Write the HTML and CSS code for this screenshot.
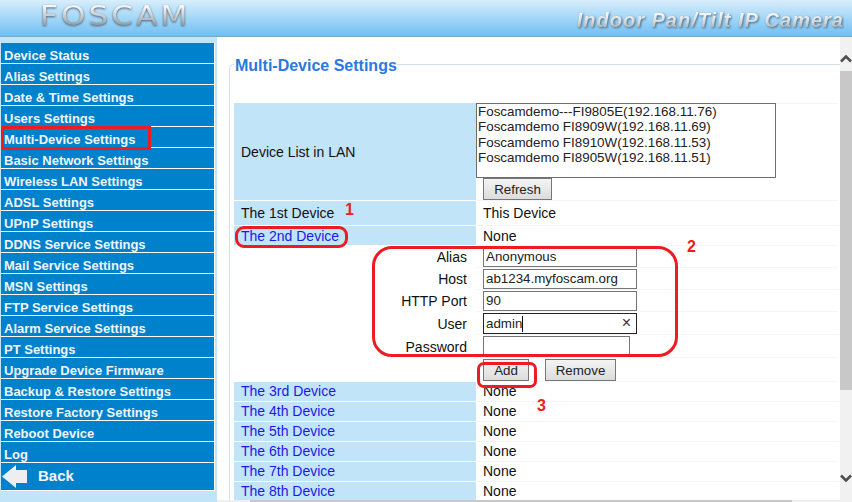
FILE: index.html
```html
<!DOCTYPE html>
<html lang="en">
<head>
<meta charset="utf-8">
<title>Multi-Device Settings</title>
<link rel="stylesheet" href="styles.css">
</head>
<body>
<div class="page">
  <header class="top">
    <div class="logo">FOSCAM</div>
    <div class="tagline">Indoor Pan/Tilt IP Camera</div>
  </header>
  <div class="main">
    <nav class="side">
      <ul class="menu">
        <li>Device Status</li>
        <li>Alias Settings</li>
        <li>Date &amp; Time Settings</li>
        <li>Users Settings</li>
        <li>Multi-Device Settings</li>
        <li>Basic Network Settings</li>
        <li>Wireless LAN Settings</li>
        <li>ADSL Settings</li>
        <li>UPnP Settings</li>
        <li>DDNS Service Settings</li>
        <li>Mail Service Settings</li>
        <li>MSN Settings</li>
        <li>FTP Service Settings</li>
        <li>Alarm Service Settings</li>
        <li>PT Settings</li>
        <li>Upgrade Device Firmware</li>
        <li>Backup &amp; Restore Settings</li>
        <li>Restore Factory Settings</li>
        <li>Reboot Device</li>
        <li>Log</li>
        <li class="back">
          <svg class="back-arrow" width="25" height="25" viewBox="0 0 25 25"><path d="M0 12.5 L14 1 V6 H25 V19 H14 V24 Z" fill="#eeeeee"/></svg>
          <span class="back-label">Back</span>
        </li>
      </ul>
    </nav>
    <div class="pane">
      <div class="view">
        <div class="scroller">
          <fieldset class="box">
            <legend class="title">Multi-Device Settings</legend>
            <table class="grid">
              <tr class="r-list">
                <th>Device List in LAN</th>
                <td>
                  <div class="listbox">
                    <div>Foscamdemo---FI9805E(192.168.11.76)</div>
                    <div>Foscamdemo FI8909W(192.168.11.69)</div>
                    <div>Foscamdemo FI8910W(192.168.11.53)</div>
                    <div>Foscamdemo FI8905W(192.168.11.51)</div>
                  </div>
                  <button class="btn btn-refresh">Refresh</button>
                </td>
              </tr>
              <tr class="r-first"><th>The 1st Device</th><td class="val">This Device</td></tr>
              <tr class="r-dev"><th class="link">The 2nd Device</th><td class="val">None</td></tr>
              <tr class="r-form"><th class="lbl">Alias</th><td><span class="inp">Anonymous</span></td></tr>
              <tr class="r-form"><th class="lbl">Host</th><td><span class="inp">ab1234.myfoscam.org</span></td></tr>
              <tr class="r-form"><th class="lbl">HTTP Port</th><td><span class="inp">90</span></td></tr>
              <tr class="r-form r-user"><th class="lbl">User</th><td><span class="inp inp-focus"><span class="typed">admin</span><span class="clear">×</span></span></td></tr>
              <tr class="r-form r-pass"><th class="lbl">Password</th><td><span class="inp inp-pass"></span></td></tr>
              <tr class="r-btns"><th class="lbl"></th><td><button class="btn btn-add">Add</button><button class="btn btn-remove">Remove</button></td></tr>
              <tr class="r-dev r-low"><th class="link">The 3rd Device</th><td class="val">None</td></tr>
              <tr class="r-dev r-low"><th class="link">The 4th Device</th><td class="val">None</td></tr>
              <tr class="r-dev r-low"><th class="link">The 5th Device</th><td class="val">None</td></tr>
              <tr class="r-dev r-low"><th class="link">The 6th Device</th><td class="val">None</td></tr>
              <tr class="r-dev r-low"><th class="link">The 7th Device</th><td class="val">None</td></tr>
              <tr class="r-dev r-low"><th class="link">The 8th Device</th><td class="val">None</td></tr>
            </table>
          </fieldset>
        </div>
        <div class="hbar"><div class="hthumb"></div></div>
      </div>
      <div class="vbar">
        <svg class="chev" width="12" height="8" viewBox="0 0 12 8"><path d="M1 6.5 L6 1.5 L11 6.5" fill="none" stroke="#505050" stroke-width="2.6"/></svg>
        <div class="thumb"></div>
        <svg class="chev chev-down" width="12" height="8" viewBox="0 0 12 8"><path d="M1 1.5 L6 6.5 L11 1.5" fill="none" stroke="#505050" stroke-width="2.6"/></svg>
      </div>
    </div>
  </div>
  <div class="mark mark-menu"></div>
  <div class="mark mark-dev"></div>
  <div class="mark mark-form"></div>
  <div class="mark mark-add"></div>
  <div class="num num-1">1</div>
  <div class="num num-2">2</div>
  <div class="num num-3">3</div>
</div>
</body>
</html>
```
FILE: styles.css
```css
* { box-sizing: border-box; }
html, body { margin: 0; padding: 0; }
body { font-family: "Liberation Sans", Arial, sans-serif; font-size: 14px; color: #111; background: #fff; }
.page { position: relative; width: 852px; height: 502px; overflow: hidden; display: flex; flex-direction: column; }

.top { height: 37px; flex: none; display: flex; justify-content: space-between; align-items: flex-start; padding: 0 8px 0 40px; background: linear-gradient(#d8eefc, #6fbff3); border-bottom: 1px solid #7ea6bd; }
.logo { margin-top: 1px; font-family: "DejaVu Sans", sans-serif; font-size: 26px; line-height: 30px; letter-spacing: 2.5px; transform: scaleX(1.2); transform-origin: left center; background: linear-gradient(#f4f6f7 20%, #c0c6cc 55%, #8b9299 85%); -webkit-background-clip: text; background-clip: text; color: transparent; filter: drop-shadow(0 1px 1px #4c5c6a); }
.tagline { margin-top: 8px; font-size: 20px; line-height: 24px; font-weight: bold; font-style: italic; letter-spacing: 1px; background: linear-gradient(#fafbfb 20%, #d2d7dc 60%, #a4acb4 85%); -webkit-background-clip: text; background-clip: text; color: transparent; filter: drop-shadow(1px 1px 1px #4c6a80); }

.main { flex: 1; display: flex; min-height: 0; }
.side { width: 217px; flex: none; background: #c2e4f9; padding: 6px 0 0 1px; }
.menu { list-style: none; margin: 0; padding: 0; width: 214px; background: #0081cc; border-right: 1px solid #fff; }
.menu li { height: 21px; border-bottom: 1px solid #fff; color: #f0f6fb; font-weight: bold; font-size: 13px; line-height: 26px; padding-left: 3px; white-space: nowrap; overflow: hidden; }
.menu li.back { height: 28px; display: flex; align-items: center; gap: 11px; padding-left: 1px; font-size: 15px; line-height: 24px; }
.back-arrow { flex: none; }
.back-label { margin-top: -2px; }

.pane { flex: 1; display: flex; min-width: 0; }
.view { flex: 1; min-width: 0; display: flex; flex-direction: column; }
.scroller { flex: 1; min-height: 0; padding: 16px 0 0 12px; overflow: hidden; }
.hbar { height: 2px; flex: none; background: #efefef; padding-left: 33px; }
.hthumb { width: 542px; height: 2px; background: #c8c8c8; }
.box { margin: 0; padding: 0 1px 0 4px; width: 611px; height: 500px; border: 1px solid #d3dfe9; border-radius: 5px 0 0 0; border-right: none; }
.title { padding: 4px 0 0 1px; margin-left: 0; font-size: 16px; font-weight: bold; line-height: 18px; color: #2a78e0; }

.grid { border-collapse: separate; border-spacing: 0; width: 604px; table-layout: fixed; margin-top: 28px; }
.grid th { width: 242px; font-weight: normal; text-align: left; padding: 0 0 0 7px; background: #c2e4f9; border-bottom: 1px solid #fff; }
.grid td { padding: 0; border-bottom: 1px solid #f6f6f6; vertical-align: top; }
.grid th.lbl { background: #fff; text-align: right; padding: 0 9px 0 0; border-bottom: none; }
.grid th.link { color: #1a1ae6; }
.grid td.val { padding-left: 7px; vertical-align: middle; }
.grid .r-low th, .grid .r-low td.val { padding-bottom: 2px; }

.r-list { height: 98px; }
.r-list td { box-shadow: inset 0 1px #f6f6f6; }
.r-first { height: 25px; }
.r-dev { height: 20px; }
.r-form { height: 22px; }
.r-user { height: 23px; }
.r-pass { height: 23px; }
.r-btns { height: 24px; }

.listbox { width: 300px; height: 75px; border: 1px solid #6e6e6e; padding: 0 0 0 1px; font-size: 13.4px; line-height: 15.3px; background: #fff; color: #222; }
.inp { display: block; width: 154px; height: 20px; margin: 1px 0 0 7px; border: 1px solid #767676; padding: 0 2px; line-height: 18px; font-size: 13.33px; color: #222; background: #fff; }
.inp-focus { height: 21px; border-color: #222; display: flex; justify-content: space-between; }
.typed { border-right: 1px solid #111; height: 16px; line-height: 16px; margin-top: 2px; }
.clear { font-size: 16px; line-height: 18px; padding-right: 3px; color: #333; }
.inp-pass { width: 147px; height: 21px; }

.btn { display: inline-block; height: 22px; padding: 1px 0 0; font-family: inherit; font-size: 13.33px; line-height: 20px; color: #222; border: 1px solid #777; background: linear-gradient(#f4f4f4, #dcdcdc); }
.btn-refresh { width: 69px; margin: 0 0 0 7px; display: block; }
.btn-add { width: 46px; margin: 1px 0 0 7px; }
.btn-remove { width: 71px; margin: 1px 0 0 16px; }

.vbar { width: 12px; flex: none; background: #f1f1f1; display: flex; flex-direction: column; align-items: center; padding-top: 18px; }
.chev { flex: none; }
.thumb { width: 12px; height: 319px; margin-top: 8px; background: #c8c8c8; }
.chev-down { margin-top: auto; margin-bottom: 20px; }

.mark { position: absolute; border: 3px solid #ed1c24; }
.mark-menu { left: 1px; top: 126px; width: 150px; height: 24px; }
.mark-dev { left: 235px; top: 226px; width: 113px; height: 22px; border-radius: 9px; }
.mark-form { left: 372px; top: 246px; width: 306px; height: 111px; border-radius: 20px; }
.mark-add { left: 477px; top: 362px; width: 60px; height: 26px; border-radius: 7px; }
.num { position: absolute; font-weight: bold; font-size: 16px; line-height: 18px; color: #ed1c24; }
.num-1 { left: 345px; top: 201px; }
.num-2 { left: 687px; top: 238px; }
.num-3 { left: 537px; top: 397px; }
```
